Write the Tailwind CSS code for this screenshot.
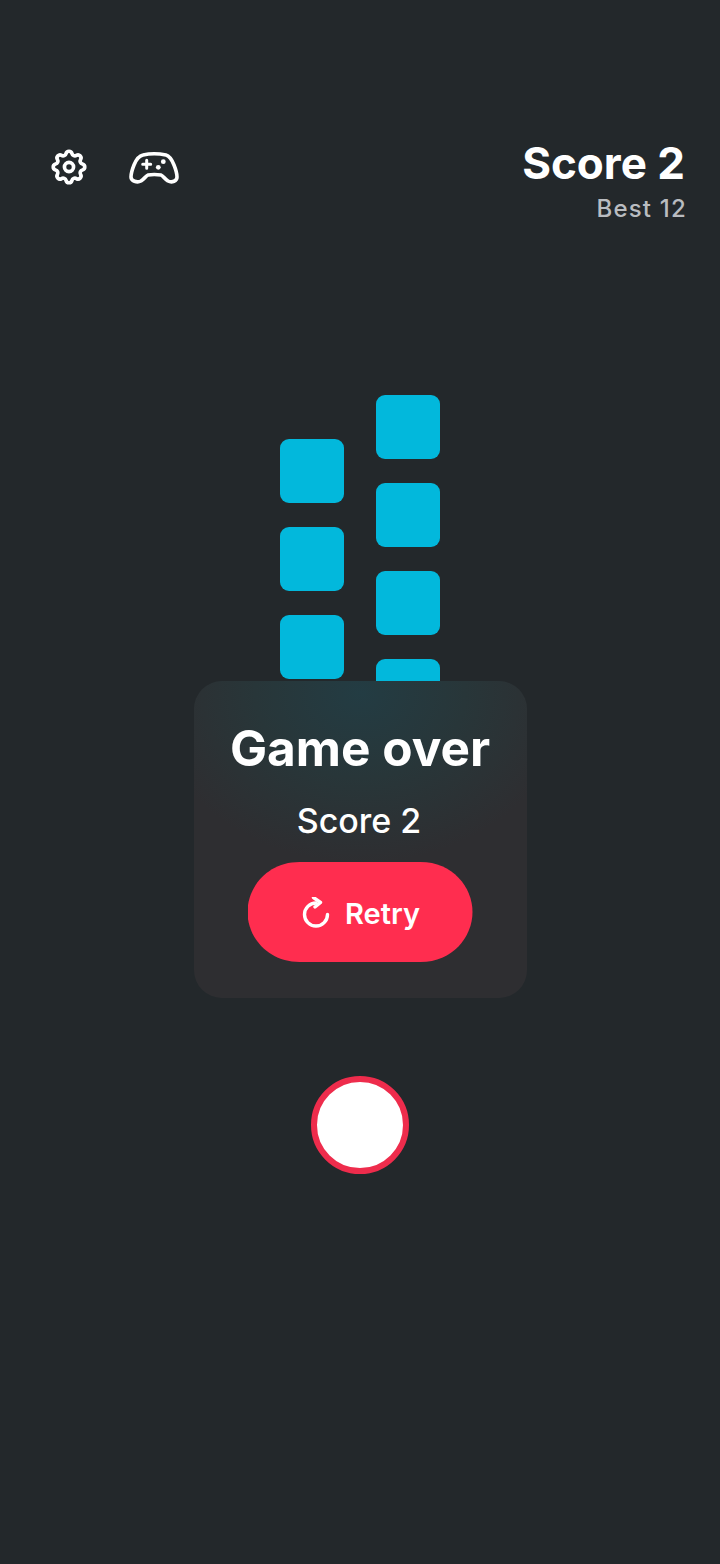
<!DOCTYPE html>
<html><head><meta charset="utf-8"><script src="https://cdn.jsdelivr.net/npm/@tailwindcss/browser@4"></script></head>
<body class="m-0">
<div class="w-[720px] h-[1564px] bg-[#23282b] font-['Inter',sans-serif] text-white flex flex-col overflow-hidden">
  <header class="flex justify-between items-start pt-[136px] pr-[35px] pl-[48px] h-[395px]">
    <div class="flex items-center gap-[39px] pt-[10px]">
      <svg class="w-[42px] h-[42px]" viewBox="0 0 24 24" fill="none" stroke="#fff" stroke-width="2.1" stroke-linecap="round" stroke-linejoin="round"><path d="M10.325 4.317c.426 -1.756 2.924 -1.756 3.35 0a1.724 1.724 0 0 0 2.573 1.066c1.543 -.94 3.31 .826 2.37 2.37a1.724 1.724 0 0 0 1.065 2.572c1.756 .426 1.756 2.924 0 3.35a1.724 1.724 0 0 0 -1.066 2.573c.94 1.543 -.826 3.31 -2.37 2.37a1.724 1.724 0 0 0 -2.572 1.065c-.426 1.756 -2.924 1.756 -3.35 0a1.724 1.724 0 0 0 -2.573 -1.066c-1.543 .94 -3.31 -.826 -2.37 -2.37a1.724 1.724 0 0 0 -1.065 -2.572c-1.756 -.426 -1.756 -2.924 0 -3.35a1.724 1.724 0 0 0 1.066 -2.573c-.94 -1.543 .826 -3.31 2.37 -2.37c1 .608 2.296 .07 2.572 -1.065z"/><circle cx="12" cy="12" r="2.6"/></svg>
      <svg class="w-[50px] h-[34px] mt-[2px]" viewBox="129 151 50 34" fill="none" stroke="#fff" stroke-width="3.6" stroke-linecap="round" stroke-linejoin="round"><path d="M143 155Q154 152.5 166 155C170 156 172 160 174 165C176 170 177 174 177 177C177 181 172 183 168 181C165 179 163 176 161 175Q154 174 148 175C146 176 144 179 141 181C137 183 131 181 131 177C131 174 132 170 134 165C136 160 138 156 143 155Z"/><path d="M142.7 164.3H150.7M146.7 160.3V168.3" stroke-width="3"/><circle cx="163.3" cy="161.7" r="2.4" fill="#fff" stroke="none"/><circle cx="158.3" cy="167.3" r="2.4" fill="#fff" stroke="none"/></svg>
    </div>
    <div class="text-right">
      <div class="text-[44px] leading-[54px] font-bold">Score 2</div>
      <div class="mt-[4px] -mr-[2px] text-[24px] leading-[30px] font-medium tracking-[1.2px] text-[#b9bcc0]">Best 12</div>
    </div>
  </header>
  <section class="flex justify-center gap-[32px] h-[286px] overflow-hidden">
    <div class="flex flex-col gap-[24px] pt-[44px]">
      <div class="w-[64px] h-[64px] rounded-[9px] bg-[#02b8dc]"></div>
      <div class="w-[64px] h-[64px] rounded-[9px] bg-[#02b8dc]"></div>
      <div class="w-[64px] h-[64px] rounded-[9px] bg-[#02b8dc]"></div>
    </div>
    <div class="flex flex-col gap-[24px]">
      <div class="w-[64px] h-[64px] shrink-0 rounded-[9px] bg-[#02b8dc]"></div>
      <div class="w-[64px] h-[64px] shrink-0 rounded-[9px] bg-[#02b8dc]"></div>
      <div class="w-[64px] h-[64px] shrink-0 rounded-[9px] bg-[#02b8dc]"></div>
      <div class="w-[64px] h-[64px] shrink-0 rounded-[9px] bg-[#02b8dc]"></div>
    </div>
  </section>
  <section class="self-center w-[333px] h-[317px] rounded-[28px] bg-[radial-gradient(ellipse_210px_170px_at_50%_12px,#233c43_0%,#283639_50%,#2e2e31_100%)] flex flex-col items-center pt-[37px]">
    <h1 class="text-[49.5px] leading-[60px] font-bold">Game over</h1>
    <p class="mt-[22px] pr-[2px] text-[34px] leading-[42px] font-medium">Score 2</p>
    <button class="mt-[20px] w-[225px] h-[100px] pt-[3px] [clip-path:path('M52_0H173C205_0_225_25_225_50C225_75_205_100_173_100H52C20_100_0_75_0_50C0_25_20_0_52_0Z')] bg-[#ff2d4f] flex items-center justify-center gap-[13px]">
      <svg class="w-[32px] h-[34px]" viewBox="300 897 32 34" fill="none" stroke="#fff" stroke-width="3.4" stroke-linecap="round" stroke-linejoin="round"><path d="M316 903A11.5 11.5 0 1 0 327.5 914.5"/><path d="M313.5 897.5L320.5 902.5L315 907"/></svg>
      <span class="text-[29px] leading-[36px] font-semibold">Retry</span>
    </button>
  </section>
  <div class="self-center mt-[78px] w-[98px] h-[98px] rounded-full bg-white border-[6px] border-[#ee2c4c] blur-[0.6px]"></div>
</div>
</body></html>
